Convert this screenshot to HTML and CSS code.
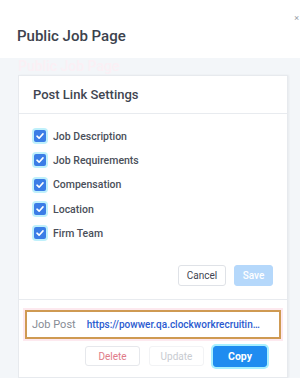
FILE: index.html
```html
<!DOCTYPE html>
<html>
<head>
<meta charset="utf-8">
<link rel="stylesheet" href="styles.css">
</head>
<body>
<div class="page">
  <header class="top">
    <h1 class="title">Public Job Page</h1>
    <span class="close">×</span>
  </header>
  <main class="area">
    <div class="ghost">Public Job Page</div>
    <section class="card">
      <div class="card-head">Post Link Settings</div>
      <ul class="checks">
        <li class="check"><span class="box"><svg viewBox="0 0 12 12" width="12" height="12"><path d="M3 6.2 L5.1 8.2 L9 3.9" fill="none" stroke="#fff" stroke-width="1.6" stroke-linecap="round" stroke-linejoin="round"/></svg></span>Job Description</li>
        <li class="check"><span class="box"><svg viewBox="0 0 12 12" width="12" height="12"><path d="M3 6.2 L5.1 8.2 L9 3.9" fill="none" stroke="#fff" stroke-width="1.6" stroke-linecap="round" stroke-linejoin="round"/></svg></span>Job Requirements</li>
        <li class="check"><span class="box"><svg viewBox="0 0 12 12" width="12" height="12"><path d="M3 6.2 L5.1 8.2 L9 3.9" fill="none" stroke="#fff" stroke-width="1.6" stroke-linecap="round" stroke-linejoin="round"/></svg></span>Compensation</li>
        <li class="check"><span class="box"><svg viewBox="0 0 12 12" width="12" height="12"><path d="M3 6.2 L5.1 8.2 L9 3.9" fill="none" stroke="#fff" stroke-width="1.6" stroke-linecap="round" stroke-linejoin="round"/></svg></span>Location</li>
        <li class="check"><span class="box"><svg viewBox="0 0 12 12" width="12" height="12"><path d="M3 6.2 L5.1 8.2 L9 3.9" fill="none" stroke="#fff" stroke-width="1.6" stroke-linecap="round" stroke-linejoin="round"/></svg></span>Firm Team</li>
      </ul>
      <div class="actions">
        <button class="btn btn-cancel">Cancel</button>
        <button class="btn btn-save">Save</button>
      </div>
      <div class="post">
        <div class="field">
          <span class="label">Job Post</span>
          <span class="url">https://powwer.qa.clockworkrecruitin…</span>
        </div>
        <div class="post-actions">
          <button class="btn btn-delete">Delete</button>
          <button class="btn btn-update">Update</button>
          <button class="btn btn-copy">Copy</button>
        </div>
      </div>
    </section>
  </main>
</div>
</body>
</html>
```

FILE: styles.css
```css
* { box-sizing: border-box; }
html, body { margin: 0; padding: 0; }
body {
  width: 300px;
  height: 378px;
  overflow: hidden;
  font-family: Roboto, "Liberation Sans", sans-serif;
  background: #f3f6f9;
}
.page { display: flex; flex-direction: column; height: 378px; }
.top {
  height: 58px;
  background: #fff;
  display: flex;
  align-items: flex-start;
  justify-content: space-between;
  padding: 0 0 0 17px;
}
.title {
  margin: 27px 0 0;
  font-size: 15px;
  font-weight: 500;
  color: #3c424d;
  line-height: 18px;
}
.close {
  margin-top: 12px;
  margin-right: 1px;
  font-size: 9px;
  color: #9aa0a8;
  line-height: 12px;
}
.area {
  flex: 1;
  padding: 0 12px 0 18px;
  display: flex;
  flex-direction: column;
}
.ghost {
  height: 17px;
  line-height: 17px;
  font-size: 14px;
  font-weight: 500;
  color: #fbf0f5;
}
.card {
  flex: 1;
  background: #fff;
  border: 1px solid #e7eaee;
  box-shadow: 1px 0 2px rgba(0,0,0,0.05);
}
.card-head {
  height: 38px;
  border-bottom: 1px solid #e8ebef;
  padding-left: 14px;
  display: flex;
  align-items: center;
  font-size: 13px;
  font-weight: 500;
  color: #3f4551;
}
.checks {
  list-style: none;
  margin: 0;
  padding: 10px 0 0 15px;
}
.check {
  height: 24.3px;
  display: flex;
  align-items: center;
  font-size: 10.5px;
  font-weight: 500;
  color: #4a4f5a;
}
.box {
  width: 12px;
  height: 12px;
  border-radius: 2px;
  background: #3b7de6;
  box-shadow: 0 0 0 2px #bff0fb;
  margin-right: 7px;
  display: flex;
}
.actions {
  display: flex;
  justify-content: flex-end;
  gap: 8px;
  padding: 20px 14px 13px 0;
  border-bottom: 1px solid #e8ebef;
}
.btn {
  height: 21px;
  font-family: Roboto, "Liberation Sans", sans-serif;
  font-size: 10px;
  border-radius: 3px;
  padding: 0;
  cursor: pointer;
}
.btn-cancel {
  width: 48px;
  background: #fff;
  border: 1px solid #dfe2e7;
  color: #3f4551;
}
.btn-save {
  width: 39px;
  background: #b5d8fb;
  border: 1px solid #b5d8fb;
  color: #fff;
  font-weight: 500;
}
.post { padding: 10px 6px 0 6px; }
.field {
  height: 29px;
  width: 256px;
  border: 2px solid #cf9a52;
  box-shadow: 0 0 0 2px #fde9ef;
  display: flex;
  align-items: center;
  padding-left: 5px;
  background: #fff;
  white-space: nowrap;
  overflow: hidden;
}
.label {
  font-size: 11px;
  color: #878c95;
  margin-right: 11px;
}
.url {
  font-size: 10px;
  font-weight: 500;
  color: #2b5bd0;
}
.post-actions {
  display: flex;
  gap: 9px;
  padding: 7px 0 0 60px;
}
.btn-delete {
  width: 55px;
  height: 20px;
  background: #fff;
  border: 1px solid #e6e8ec;
  color: #e07b88;
}
.btn-update {
  width: 55px;
  height: 20px;
  background: #fff;
  border: 1px solid #f2f3f5;
  color: #c8cbd1;
}
.btn-copy {
  width: 54px;
  background: #1f8cf0;
  border: 1px solid #1f8cf0;
  color: #fff;
  font-weight: 700;
  font-size: 10.5px;
  box-shadow: 0 0 0 2px #a8f0ff;
}
```
